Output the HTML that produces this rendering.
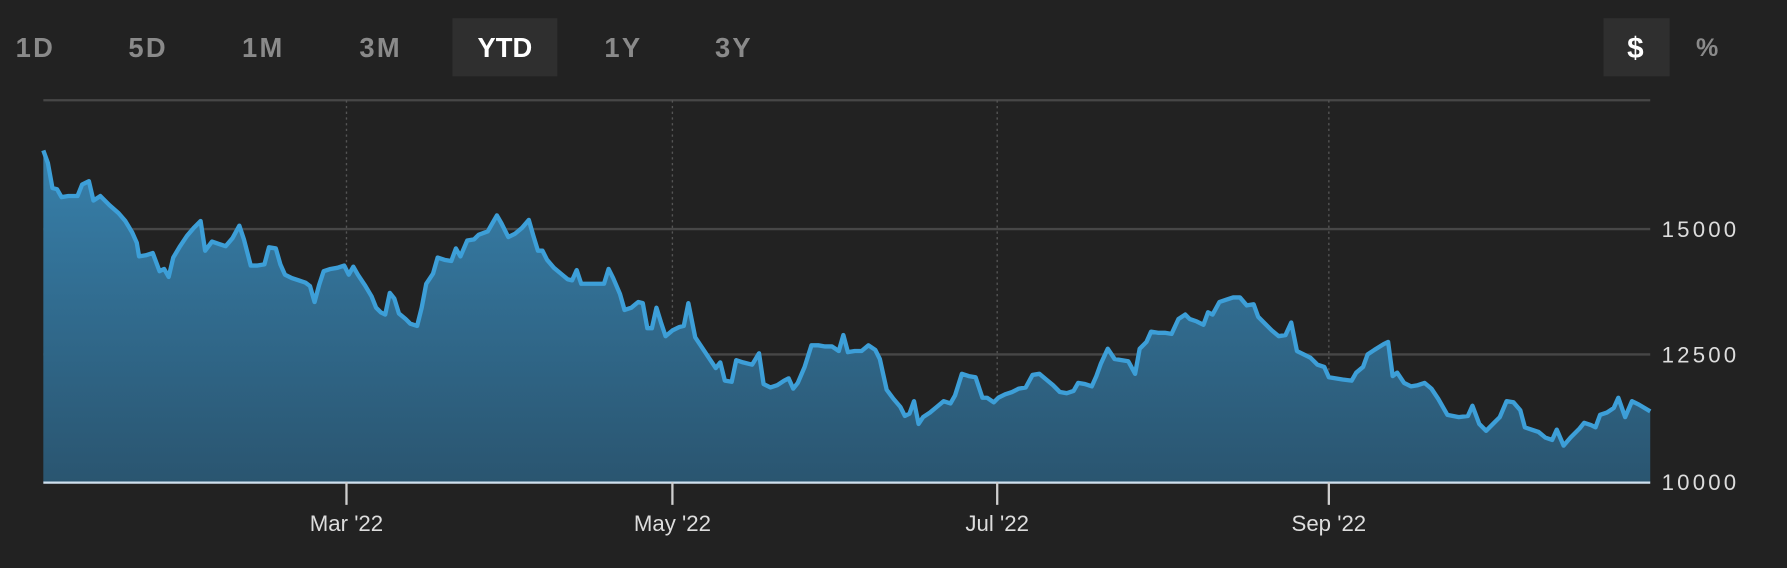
<!DOCTYPE html>
<html><head><meta charset="utf-8"><style>
html,body{margin:0;padding:0;background:#222;width:1787px;height:568px;overflow:hidden}
svg{display:block}
</style></head><body>
<svg width="1787" height="568" viewBox="0 0 1568 498.4" xmlns="http://www.w3.org/2000/svg" font-family="Liberation Sans, DejaVu Sans, sans-serif">
<defs><linearGradient id="g" x1="0" y1="0" x2="0" y2="1"><stop offset="0" stop-color="#3780ab"/><stop offset="1" stop-color="#2a5570"/></linearGradient></defs>
<rect width="1568" height="498.4" fill="#222"/>
<rect x="397" y="16" width="92" height="51" fill="#2f2f2f"/>
<rect x="1407" y="16" width="58" height="51" fill="#2f2f2f"/>
<g font-weight="bold" font-size="24" fill="#8a8a8a" text-anchor="middle" letter-spacing="2">
<text x="31" y="50" transform="scale(1,1)">1D</text><text x="130" y="50">5D</text><text x="231" y="50">1M</text><text x="334" y="50">3M</text>
<text x="443" y="50" fill="#fff" letter-spacing="0">YTD</text><text x="547" y="50">1Y</text><text x="644" y="50">3Y</text>
<text x="1436" y="51" fill="#fff" font-size="26">$</text><text x="1499" y="49" font-size="22">%</text>
</g>
<g stroke="#474747" stroke-width="2"><line x1="38" y1="88" x2="1448" y2="88"/><line x1="38" y1="201" x2="1448" y2="201"/><line x1="38" y1="311" x2="1448" y2="311"/></g>
<g stroke="#555" stroke-width="1.2" stroke-dasharray="2,3"><line x1="304" y1="88" x2="304" y2="423"/><line x1="590" y1="88" x2="590" y2="423"/><line x1="875" y1="88" x2="875" y2="423"/><line x1="1166" y1="88" x2="1166" y2="423"/></g>
<polygon fill="url(#g)" points="38,423 38,132 42,143 46,165 50,166 54,173 60,172 68,172 72,162 78,159 82,176 88,172 96,180 104,187 110,194 116,204 120,213 122,225 128,224 134,222 140,238 144,236 148,243 152,226 158,216 164,207 170,200 176,194 180,220 186,212 192,214 198,216 204,209 210,198 214,210 220,233 226,233 232,232 236,217 242,218 246,232 250,241 256,244 262,246 268,248 272,251 276,265 280,250 284,238 290,236 296,235 302,233 306,241 310,234 314,241 320,250 326,260 330,270 334,274 338,276 342,257 346,262 350,275 356,280 360,284 366,286 370,270 374,249 380,240 384,226 390,228 396,229 400,218 404,225 410,211 416,210 420,206 428,203 432,196 436,189 440,196 446,208 452,205 458,200 464,193 468,207 472,220 476,220 480,228 486,235 492,240 498,245 502,246 506,237 510,249 516,249 524,249 530,249 534,236 538,244 544,258 548,272 554,270 560,265 564,266 568,288 572,288 576,270 580,283 584,295 590,290 596,287 600,286 604,266 610,296 616,305 622,314 628,323 632,318 636,334 642,335 646,316 652,318 660,320 666,310 670,337 676,340 682,338 688,334 692,332 696,341 700,336 706,322 712,303 718,303 724,304 730,304 736,308 740,294 744,309 750,308 756,308 762,303 768,307 772,315 778,342 784,350 790,357 794,365 798,363 802,352 806,372 810,366 816,362 822,357 828,352 834,354 838,347 844,328 850,330 856,331 862,349 866,349 872,353 876,349 882,346 888,344 894,341 900,340 906,329 912,328 918,333 924,338 930,344 936,345 942,343 946,336 952,337 958,339 962,330 966,319 972,306 978,315 984,316 990,317 996,328 1000,306 1006,300 1010,291 1016,292 1022,292 1028,293 1034,280 1040,276 1044,280 1050,282 1056,285 1060,274 1064,276 1070,265 1076,263 1082,261 1088,261 1094,268 1100,267 1104,278 1110,284 1116,290 1122,295 1128,294 1133,283 1138,308 1144,311 1150,314 1156,320 1162,322 1166,331 1172,332 1178,333 1186,334 1190,327 1196,322 1200,311 1206,307 1214,302 1218,300 1222,330 1226,327 1232,336 1238,339 1244,338 1250,336 1256,341 1262,350 1270,364 1280,366 1288,365 1292,356 1298,372 1304,378 1310,372 1316,366 1322,352 1328,353 1334,360 1338,375 1344,377 1350,379 1356,384 1362,386 1366,377 1372,391 1378,384 1386,376 1390,371 1396,373 1400,375 1404,364 1410,362 1416,358 1420,349 1426,366 1432,352 1438,355 1448,361 1448,423"/>
<polyline fill="none" stroke="#3d9fd8" stroke-width="3.8" stroke-linejoin="round" points="38,132 42,143 46,165 50,166 54,173 60,172 68,172 72,162 78,159 82,176 88,172 96,180 104,187 110,194 116,204 120,213 122,225 128,224 134,222 140,238 144,236 148,243 152,226 158,216 164,207 170,200 176,194 180,220 186,212 192,214 198,216 204,209 210,198 214,210 220,233 226,233 232,232 236,217 242,218 246,232 250,241 256,244 262,246 268,248 272,251 276,265 280,250 284,238 290,236 296,235 302,233 306,241 310,234 314,241 320,250 326,260 330,270 334,274 338,276 342,257 346,262 350,275 356,280 360,284 366,286 370,270 374,249 380,240 384,226 390,228 396,229 400,218 404,225 410,211 416,210 420,206 428,203 432,196 436,189 440,196 446,208 452,205 458,200 464,193 468,207 472,220 476,220 480,228 486,235 492,240 498,245 502,246 506,237 510,249 516,249 524,249 530,249 534,236 538,244 544,258 548,272 554,270 560,265 564,266 568,288 572,288 576,270 580,283 584,295 590,290 596,287 600,286 604,266 610,296 616,305 622,314 628,323 632,318 636,334 642,335 646,316 652,318 660,320 666,310 670,337 676,340 682,338 688,334 692,332 696,341 700,336 706,322 712,303 718,303 724,304 730,304 736,308 740,294 744,309 750,308 756,308 762,303 768,307 772,315 778,342 784,350 790,357 794,365 798,363 802,352 806,372 810,366 816,362 822,357 828,352 834,354 838,347 844,328 850,330 856,331 862,349 866,349 872,353 876,349 882,346 888,344 894,341 900,340 906,329 912,328 918,333 924,338 930,344 936,345 942,343 946,336 952,337 958,339 962,330 966,319 972,306 978,315 984,316 990,317 996,328 1000,306 1006,300 1010,291 1016,292 1022,292 1028,293 1034,280 1040,276 1044,280 1050,282 1056,285 1060,274 1064,276 1070,265 1076,263 1082,261 1088,261 1094,268 1100,267 1104,278 1110,284 1116,290 1122,295 1128,294 1133,283 1138,308 1144,311 1150,314 1156,320 1162,322 1166,331 1172,332 1178,333 1186,334 1190,327 1196,322 1200,311 1206,307 1214,302 1218,300 1222,330 1226,327 1232,336 1238,339 1244,338 1250,336 1256,341 1262,350 1270,364 1280,366 1288,365 1292,356 1298,372 1304,378 1310,372 1316,366 1322,352 1328,353 1334,360 1338,375 1344,377 1350,379 1356,384 1362,386 1366,377 1372,391 1378,384 1386,376 1390,371 1396,373 1400,375 1404,364 1410,362 1416,358 1420,349 1426,366 1432,352 1438,355 1448,361"/>
<line x1="38" y1="423.5" x2="1448" y2="423.5" stroke="#cfe0ee" stroke-width="2"/>
<g stroke="#cfcfcf" stroke-width="2"><line x1="304" y1="423" x2="304" y2="443"/><line x1="590" y1="423" x2="590" y2="443"/><line x1="875" y1="423" x2="875" y2="443"/><line x1="1166" y1="423" x2="1166" y2="443"/></g>
<g fill="#ddd" font-size="19.5" text-anchor="middle"><text x="304" y="466">Mar '22</text><text x="590" y="466">May '22</text><text x="875" y="466">Jul '22</text><text x="1166" y="466">Sep '22</text></g>
<g fill="#ddd" font-size="19.5" letter-spacing="2.8"><text x="1458" y="208">15000</text><text x="1458" y="318">12500</text><text x="1458" y="430">10000</text></g>
</svg>
</body></html>
